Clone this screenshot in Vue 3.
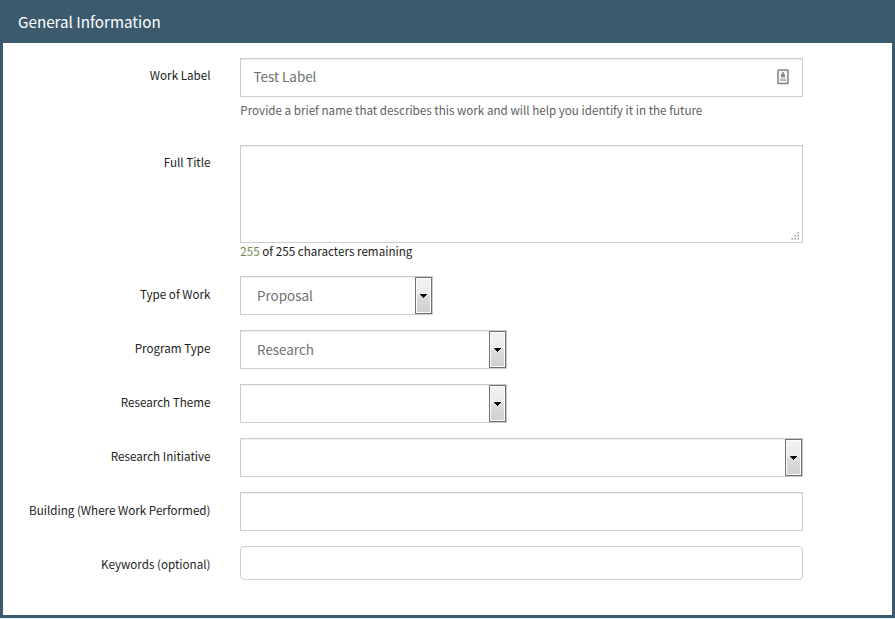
<script setup>
import { ref, computed } from 'vue'

const maxLength = 255
const title = ref('')
const remaining = computed(() => maxLength - title.value.length)

const selects = [
  { label: 'Type of Work', value: 'Proposal', size: 'small' },
  { label: 'Program Type', value: 'Research', size: 'medium' },
  { label: 'Research Theme', value: '', size: 'medium' },
  { label: 'Research Initiative', value: '', size: 'full' },
]
</script>

<template>
  <section class="panel">
    <h1 class="heading">General Information</h1>
    <form class="form">
      <div class="row row-label">
        <label class="label">Work Label</label>
        <div class="field">
          <div class="control">
            <span class="value entered">Test Label</span>
            <svg class="contact" width="12" height="16" viewBox="0 0 12 16">
              <rect x="1" y="1" width="10" height="13.5" rx="0.6" fill="#f4f4f4" stroke="#858585" stroke-width="1.5" />
              <path d="M5.2 3h1.6v2.2H8V8H4V5.2h1.2z" fill="#858585" />
              <path d="M3.5 8.8h5v1h-5zM3 10.2h6v1.8H3z" fill="#b5b5b5" />
            </svg>
          </div>
          <p class="help">Provide a brief name that describes this work and will help you identify it in the future</p>
        </div>
      </div>

      <div class="row row-title">
        <label class="label">Full Title</label>
        <div class="field">
          <div class="control area">
            <svg class="grip" width="9" height="9" viewBox="0 0 9 9" shape-rendering="crispEdges">
              <path d="M6 0h2v2h-2zM3 3h2v2h-2zM6 3h2v2h-2zM0 6h2v2h-2zM3 6h2v2h-2zM6 6h2v2h-2z" fill="#d0d0d0" />
              <path d="M7 0h1v1h-1zM4 3h1v1h-1zM7 3h1v1h-1zM1 6h1v1h-1zM4 6h1v1h-1zM7 6h1v1h-1z" fill="#a0a0a0" />
            </svg>
          </div>
          <p class="counter"><span class="count">{{ remaining }}</span> of 255 characters remaining</p>
        </div>
      </div>

      <div v-for="s in selects" :key="s.label" class="row">
        <label class="label">{{ s.label }}</label>
        <div class="field">
          <div class="control select" :class="s.size">
            <span class="value">{{ s.value }}</span>
            <span class="drop">
              <svg width="7" height="4" viewBox="0 0 7 4" shape-rendering="crispEdges">
                <path d="M0 0h7v1h-1v1h-1v1h-1v1h-1v-1h-1v-1h-1v-1h-1z" fill="#000" />
              </svg>
            </span>
          </div>
        </div>
      </div>

      <div class="row">
        <label class="label">Building (Where Work Performed)</label>
        <div class="field"><div class="control"></div></div>
      </div>
      <div class="row">
        <label class="label">Keywords (optional)</label>
        <div class="field"><div class="control keywords"></div></div>
      </div>
    </form>
  </section>
</template>

<style>
body {
  background: #e9eff5;
}
</style>

<style scoped>
.panel {
  box-sizing: border-box;
  height: 618px;
  border: 3px solid #3b5a6d;
  border-top: 0;
  background: #fff;
  font-family: "Noto Sans CJK SC", "Noto Sans", sans-serif;
  font-size: 11.65px;
  color: #222;
}
.heading {
  height: 43px;
  margin: 0;
  padding-left: 15px;
  background: #3b5a6d;
  color: #fff;
  font-size: 15.2px;
  font-weight: 400;
  line-height: 42px;
}
.form {
  display: flex;
  flex-direction: column;
  gap: 15px;
  padding-top: 15px;
}
.row {
  display: grid;
  grid-template-columns: 207.5px 563px;
  column-gap: 29.5px;
}
.row-label {
  height: 72px;
}
.row-title {
  height: 116px;
}
.label {
  padding-top: 8px;
  line-height: 20px;
  text-align: right;
  white-space: nowrap;
}
.row-label .label,
.row-title .label {
  padding-top: 7px;
}
.control {
  box-sizing: border-box;
  display: flex;
  align-items: center;
  justify-content: space-between;
  height: 39px;
  padding: 0 13px 0 12px;
  border: 1px solid #ccc;
  box-shadow: inset 0 1px 1px rgba(0, 0, 0, 0.075);
  color: #707070;
  font-size: 13.43px;
  line-height: 20px;
}
.value {
  padding-bottom: 2px;
}
.entered {
  padding: 0 0 4px 0.5px;
}
.contact {
  margin-bottom: 1px;
}
.area {
  align-items: flex-end;
  justify-content: flex-end;
  height: 98px;
  padding: 0 2px 1px 0;
}
.select {
  padding: 0 0 0 16px;
}
.small {
  width: 193px;
}
.medium {
  width: 267px;
}
.drop {
  box-sizing: border-box;
  display: flex;
  align-items: center;
  justify-content: center;
  width: 17px;
  height: 37px;
  border: 1px solid #707070;
  box-shadow: inset 0 0 0 1px #fcfcfc;
  background: linear-gradient(#f2f2f2, #ebebeb 50%, #ddd 50%, #cfcfcf);
}
.keywords {
  height: 34px;
  border-radius: 4px;
  box-shadow: none;
}
.help,
.counter {
  margin: 0;
  line-height: 20px;
  white-space: nowrap;
}
.help {
  padding: 3px 0 0 0.3px;
  color: #5f5f5f;
}
.counter {
  padding-left: 0.3px;
  line-height: 16px;
}
.count {
  color: #6b8e4e;
}
</style>
